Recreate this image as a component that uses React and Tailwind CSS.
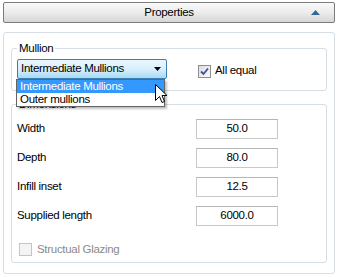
import { useState } from 'react';

const ROWS = [
  { key: 'width', label: 'Width', value: '50.0' },
  { key: 'depth', label: 'Depth', value: '80.0' },
  { key: 'inset', label: 'Infill inset', value: '12.5' },
  { key: 'length', label: 'Supplied length', value: '6000.0' },
];

function Cursor() {
  return (
    <svg width="13" height="21" viewBox="0 0 13 21" className="absolute left-[155px] top-[84px]">
      <path
        d="M0.5 0.5 L0.5 16.5 L4.5 12.5 L7 18.5 L9.5 17.5 L7 11.5 L12 11.5 Z"
        fill="white"
        stroke="black"
        strokeWidth="1"
        strokeLinejoin="miter"
      />
    </svg>
  );
}

function CheckBox({ checked, disabled }) {
  return (
    <div
      className={[
        'w-[13px] h-[13px] border flex items-center justify-center shrink-0',
        disabled ? 'border-[#c4c4c4] bg-[#f4f4f4]' : 'border-[#8e8f8f] bg-gradient-to-br from-[#dcdcdc] to-[#fbfbfb]',
      ].join(' ')}
    >
      {checked && (
        <svg width="9" height="9" viewBox="0 0 9 9">
          <path d="M1 4.5 L3.5 7 L8 1.5" fill="none" stroke="#3553a6" strokeWidth="1.8" />
        </svg>
      )}
    </div>
  );
}

export default function App() {
  const [mullion] = useState('Intermediate Mullions');

  return (
    <div className="w-[338px] h-[277px] bg-white relative overflow-hidden text-[11.5px] tracking-[-0.3px] text-black font-['Liberation_Sans',Arial,sans-serif]">
      {/* Header */}
      <div className="mx-[3px] mt-[2px] h-[21px] border border-[#7b7b7b] rounded-[2px] bg-gradient-to-b from-[#fafafa] via-[#ececec] to-[#d6d6d6] flex items-center relative">
        <div className="flex-1 text-center leading-none">Properties</div>
        <svg width="9" height="5" viewBox="0 0 9 5" className="absolute right-[14px] top-[7px]">
          <path d="M0 5 L4.5 0 L9 5 Z" fill="#2e6a9c" />
        </svg>
      </div>

      {/* Panel */}
      <div className="mx-[3px] mt-[9px] h-[242px] border border-[#d5dfe5] rounded-[3px] pl-[7px] pt-[15px]">
        {/* Mullion group */}
        <div className="relative w-[316px] h-[43px] border border-[#d5dfe5] rounded-[3px]">
          <div className="absolute left-[5px] -top-[8px] bg-white px-[2px] leading-[14px]">Mullion</div>
          <div className="flex items-center pt-[10px] pl-[5px]">
            <div className="w-[150px] h-[20px] border border-[#3c7fb1] rounded-[2px] bg-gradient-to-b from-[#eaf6fd] via-[#d9f0fc] to-[#a7d9f5] flex items-center pl-[3px] pr-[5px]">
              <span className="flex-1 leading-none">{mullion}</span>
              <svg width="7" height="4" viewBox="0 0 7 4">
                <path d="M0 0 L7 0 L3.5 4 Z" fill="black" />
              </svg>
            </div>
            <div className="flex items-center gap-[4px] ml-[31px] mt-[4px]">
              <CheckBox checked />
              <span className="leading-none">All equal</span>
            </div>
          </div>
        </div>

        {/* Dimensions group */}
        <div className="relative w-[316px] h-[159px] mt-[13px] border border-[#d5dfe5] rounded-[3px]">
          <div className="absolute left-[5px] -top-[8px] bg-white px-[2px] leading-[14px]">Dimensions</div>
          <div className="flex flex-col gap-[9px] pt-[14px] pl-[5px]">
            {ROWS.map((r) => (
              <div key={r.key} className="flex items-center h-[20px]">
                <span className="w-[179px] leading-none">{r.label}</span>
                <div className="w-[82px] h-[20px] border border-[#c9c9c9] border-t-[#b5b5b5] bg-white flex items-center justify-center leading-none">
                  {r.value}
                </div>
              </div>
            ))}
          </div>
          <div className="flex items-center gap-[5px] pl-[7px] mt-[17px]">
            <CheckBox disabled />
            <span className="leading-none text-[#8a8a8a]">Structual Glazing</span>
          </div>
        </div>
      </div>

      {/* Open dropdown list */}
      <div className="absolute left-[16px] top-[79px] w-[149px] border border-[#646464] bg-white shadow-[2px_2px_2px_rgba(0,0,0,0.25)] leading-[13px]">
        <div className="bg-[#3399ff] text-white pl-[3px] h-[13px]">Intermediate Mullions</div>
        <div className="pl-[3px] h-[13px]">Outer mullions</div>
      </div>

      <Cursor />
    </div>
  );
}
